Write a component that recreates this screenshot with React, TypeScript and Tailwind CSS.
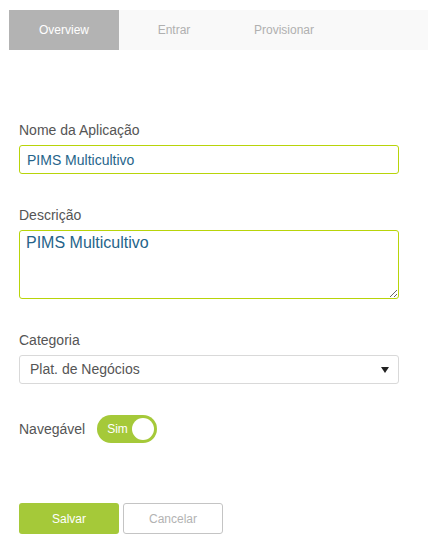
import { useState } from 'react';

const tabs = ['Overview', 'Entrar', 'Provisionar'];

export default function App() {
  const [activeTab, setActiveTab] = useState('Overview');
  const [navegavel, setNavegavel] = useState(true);

  return (
    <div className="w-[428px] h-[548px] bg-white font-['Liberation_Sans',Arial,sans-serif] overflow-hidden">
      {/* Tabs */}
      <div className="mt-[10px] ml-[9px] h-[40px] bg-[#f9f9f9] flex">
        {tabs.map((tab) => (
          <button
            key={tab}
            onClick={() => setActiveTab(tab)}
            className={`w-[110px] h-full flex items-center justify-center text-[12px] ${
              activeTab === tab ? 'bg-[#b3b3b3] text-white' : 'text-[#b0b0b0]'
            }`}
          >
            {tab}
          </button>
        ))}
      </div>

      {/* Form */}
      <div className="px-[19px] pt-[70px] w-[418px]">
        <label className="block text-[14px] leading-[20px] text-[#555] mb-[5px]">Nome da Aplicação</label>
        <input
          type="text"
          defaultValue="PIMS Multicultivo"
          className="block w-full h-[29px] px-[7px] text-[14px] text-[#26648a] border border-[#b8d40a] rounded-[3px] outline-none"
        />

        <label className="block mt-[31px] text-[14px] leading-[20px] text-[#555] mb-[5px]">Descrição</label>
        <textarea
          defaultValue="PIMS Multicultivo"
          className="block w-full h-[69px] px-[6px] pt-[2px] text-[16px] leading-[20px] text-[#26648a] border border-[#b8d40a] rounded-[3px] outline-none"
        />

        <label className="block mt-[31px] text-[14px] leading-[20px] text-[#555] mb-[5px]">Categoria</label>
        <div className="relative">
          <select
            defaultValue="plat"
            className="block w-full h-[29px] pl-[10px] pr-8 text-[14px] text-[#555] bg-white border border-[#d9d9d9] rounded-[3px] appearance-none outline-none"
          >
            <option value="plat">Plat. de Negócios</option>
          </select>
          <span className="absolute right-[10px] top-1/2 -translate-y-1/2 pointer-events-none">
            <svg width="8" height="8" viewBox="0 0 8 8">
              <path d="M0 1 H8 L4 7 Z" fill="#222" />
            </svg>
          </span>
        </div>

        <div className="mt-[31px] flex items-center h-[28px]">
          <span className="text-[14px] text-[#555] mr-[12px]">Navegável</span>
          <button
            onClick={() => setNavegavel(!navegavel)}
            className={`w-[60px] h-[28px] rounded-full flex items-center px-[3px] ${
              navegavel ? 'bg-[#a5c939] justify-between' : 'bg-[#ccc] flex-row-reverse justify-between'
            }`}
          >
            <span className="text-[12px] text-white pl-[7px]">{navegavel ? 'Sim' : 'Não'}</span>
            <span className="w-[22px] h-[22px] rounded-full bg-white" />
          </button>
        </div>

        <div className="mt-[60px] flex gap-[4px]">
          <button className="w-[100px] h-[31px] rounded-[3px] bg-[#a5c939] text-white text-[12px]">Salvar</button>
          <button className="w-[100px] h-[31px] rounded-[3px] border border-[#c4c4c4] bg-white text-[#b3b3b3] text-[12px]">
            Cancelar
          </button>
        </div>
      </div>
    </div>
  );
}
